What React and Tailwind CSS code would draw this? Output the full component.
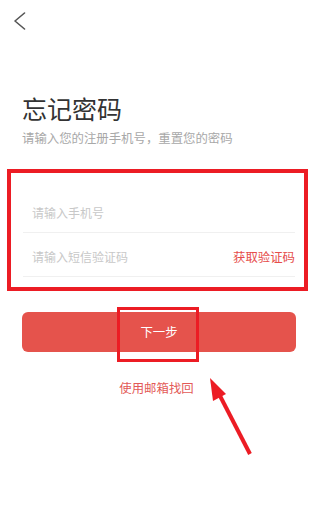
import React from "react";

export default function App() {
  return (
    <div
      className="relative w-[315px] h-[529px] bg-white overflow-hidden"
      style={{ fontFamily: '"Noto Sans CJK SC", "Noto Sans", sans-serif' }}
    >
      {/* header */}
      <div className="h-[42px] flex items-start pt-[12px] pl-[13px]">
        <svg width="14" height="18" viewBox="0 0 14 18" fill="none">
          <polyline
            points="11.5,1 2,9 11.5,17"
            stroke="#555"
            strokeWidth="1.6"
            strokeLinecap="round"
            strokeLinejoin="round"
          />
        </svg>
      </div>

      {/* title */}
      <div className="pl-[22px] pt-[51px]">
        <div className="text-[25px] leading-[30px] text-[#333]">忘记密码</div>
        <div className="mt-[6px] text-[12.4px] leading-[18px] text-[#a8a8a8]">
          请输入您的注册手机号，重置您的密码
        </div>
      </div>

      {/* annotated form box */}
      <div className="mt-[22px] ml-[7px] w-[301px] h-[122px] border-[4px] border-[#ec1c24] pl-[12px] pr-[9px] pt-[16px]">
        <div className="h-[44px] border-b border-[#f0f0f0] flex items-end pb-[11px] pl-[9px]">
          <span className="text-[12px] leading-[16px] text-[#c8c8c8]">请输入手机号</span>
        </div>
        <div className="h-[44px] border-b border-[#f0f0f0] flex items-end justify-between pb-[11px] pl-[9px]">
          <span className="text-[12px] leading-[16px] text-[#c8c8c8]">请输入短信验证码</span>
          <span className="text-[12.4px] leading-[16px] text-[#e64d4a]">获取验证码</span>
        </div>
      </div>

      {/* button */}
      <div className="relative mt-[21px] ml-[22px] mr-[19px] h-[40px] rounded-[6px] bg-[#e5534c] flex items-center justify-center">
        <span className="text-[12.4px] leading-[16px] text-white">下一步</span>
        <div className="absolute left-[95px] top-[-5px] w-[82px] h-[55px] border-[3px] border-[#ec1c24]" />
      </div>

      {/* email link */}
      <div className="mt-[27px] flex justify-center pr-[2px]">
        <span className="text-[12.4px] leading-[18px] text-[#e35a57]">使用邮箱找回</span>
      </div>

      {/* annotation arrow */}
      <svg
        className="absolute left-0 top-0 pointer-events-none"
        width="315"
        height="529"
        viewBox="0 0 315 529"
      >
        <line x1="250" y1="454" x2="218" y2="392" stroke="#ec1c24" strokeWidth="4" />
        <polygon points="210,378 226,394 213,401" fill="#ec1c24" />
      </svg>
    </div>
  );
}
